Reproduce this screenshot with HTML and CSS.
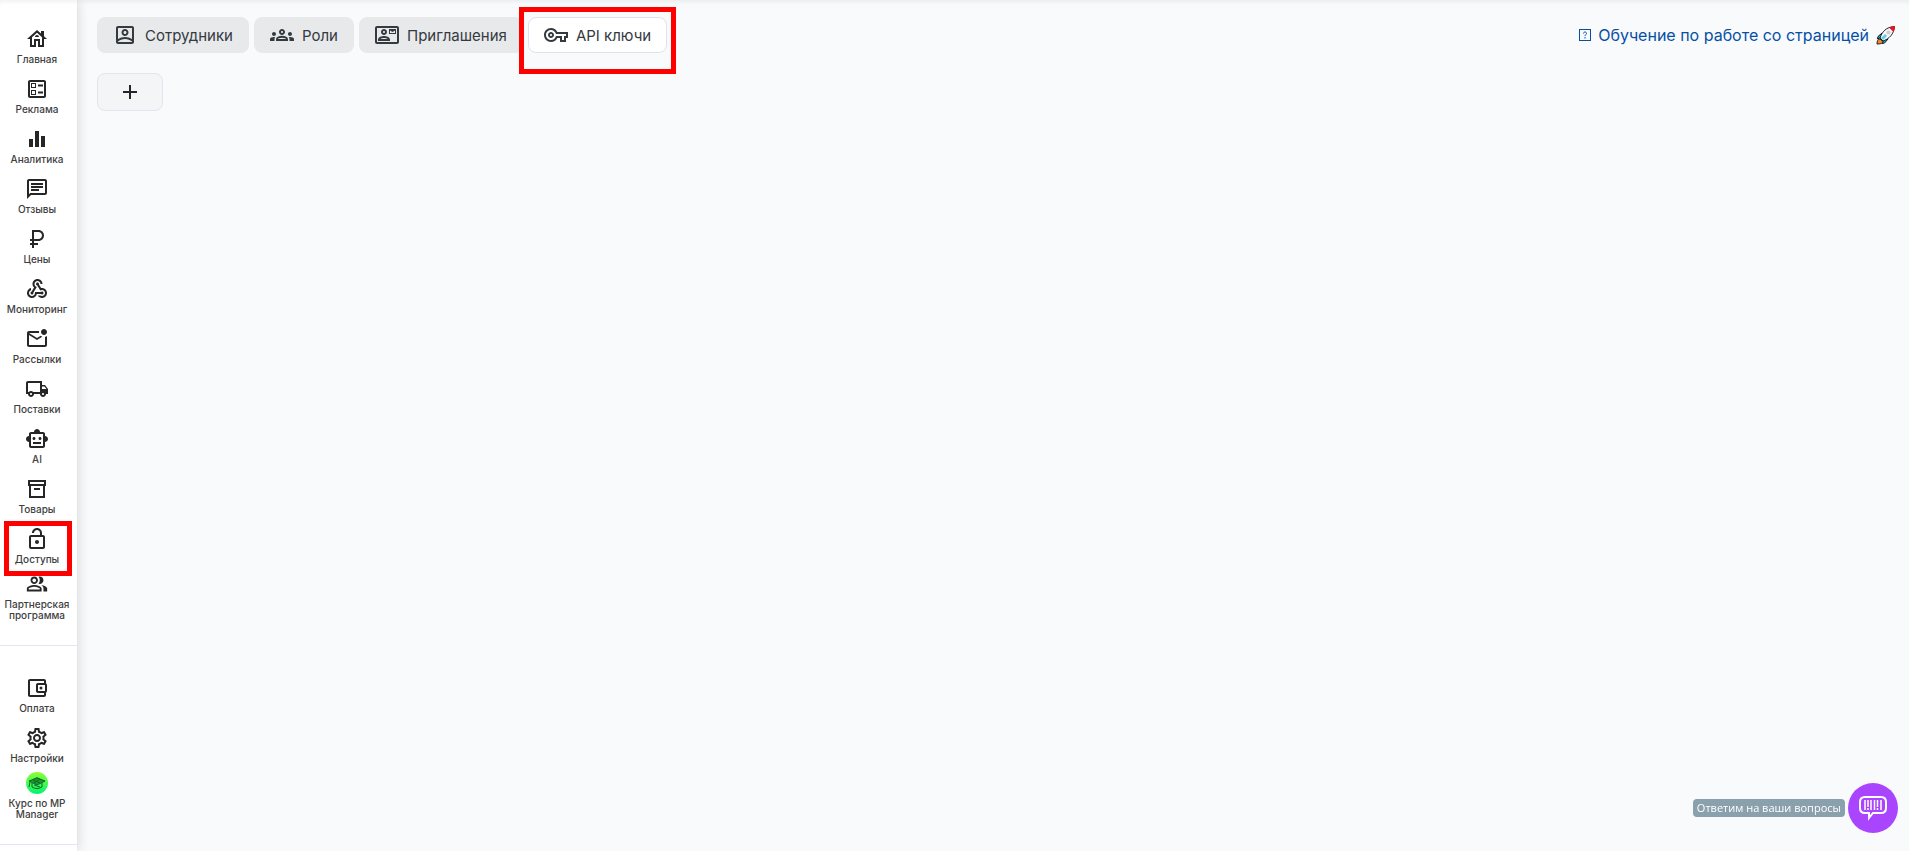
FILE: index.html
```html
<!DOCTYPE html>
<html lang="ru">
<head>
  <meta charset="UTF-8">
  <meta name="viewport" content="width=device-width, initial-scale=1.0">
  <title>API ключи</title>
  <link rel="stylesheet" href="styles.css">
</head>
<body>

  <!-- Боковое меню -->
  <aside class="sidebar">
    <nav class="menu">
      <a class="menu-item" href="#">
        <svg class="icon" viewBox="0 0 24 24"><path d="M19 9.3V4h-3v2.6L12 3 2 12h3v8h6v-6h2v6h6v-8h3zM17 18h-2v-6H9v6H7v-7.81l5-4.5 5 4.5zM10 10h4c0-1.1-.9-2-2-2s-2 .9-2 2z"/></svg>
        <span>Главная</span>
      </a>
      <a class="menu-item" href="#">
        <svg class="icon" viewBox="0 0 24 24"><path d="M13 7.5h5v2h-5zm0 7h5v2h-5zM19 3H5c-1.1 0-2 .9-2 2v14c0 1.1.9 2 2 2h14c1.1 0 2-.9 2-2V5c0-1.1-.9-2-2-2zm0 16H5V5h14v14zM11 6H6v5h5V6zm-1 4H7V7h3v3zm1 3H6v5h5v-5zm-1 4H7v-3h3v3z"/></svg>
        <span>Реклама</span>
      </a>
      <a class="menu-item" href="#">
        <svg class="icon" viewBox="0 0 24 24"><path d="M4 20v-8h4v8zm6 0V4h4v16zm6 0V9h4v11z"/></svg>
        <span>Аналитика</span>
      </a>
      <a class="menu-item" href="#">
        <svg class="icon" viewBox="0 0 24 24"><path d="M4 4h16v12H5.17L4 17.17V4m0-2c-1.1 0-1.99.9-1.99 2L2 22l4-4h14c1.1 0 2-.9 2-2V4c0-1.1-.9-2-2-2H4zm2 10h8v2H6v-2zm0-3h12v2H6V9zm0-3h12v2H6V6z"/></svg>
        <span>Отзывы</span>
      </a>
      <a class="menu-item" href="#">
        <svg class="icon" viewBox="0 0 24 24"><path d="M13.5 3H7v9H5v2h2v2H5v2h2v3h2v-3h4v-2H9v-2h4.5c3.04 0 5.5-2.46 5.5-5.5S16.54 3 13.5 3zm0 9H9V5h4.5C15.43 5 17 6.57 17 8.5S15.43 12 13.5 12z"/></svg>
        <span>Цены</span>
      </a>
      <a class="menu-item" href="#">
        <svg class="icon" viewBox="0 0 24 24"><path d="M10 15h5.88c.27-.31.67-.5 1.12-.5.83 0 1.5.67 1.5 1.5s-.67 1.5-1.5 1.5c-.44 0-.84-.19-1.12-.5H11.9c-.46 2.28-2.48 4-4.9 4-2.76 0-5-2.24-5-5 0-2.42 1.72-4.44 4-4.9v2.07C4.84 13.58 4 14.7 4 16c0 1.65 1.35 3 3 3s3-1.35 3-3v-1zm2.5-11c1.65 0 3 1.35 3 3h2c0-2.76-2.24-5-5-5s-5 2.24-5 5c0 1.43.6 2.71 1.55 3.62l-2.35 3.9c-.68.14-1.2.75-1.2 1.48 0 .83.67 1.5 1.5 1.5s1.5-.67 1.5-1.5c0-.16-.02-.31-.07-.45l3.38-5.63C10.49 9.61 9.5 8.42 9.5 7c0-1.65 1.35-3 3-3zm4.5 9c-.64 0-1.23.2-1.72.54l-3.05-5.07C11.53 8.35 11 7.74 11 7c0-.83.67-1.5 1.5-1.5S14 6.17 14 7c0 .15-.02.29-.06.43l2.19 3.65c.28-.05.57-.08.87-.08 2.76 0 5 2.24 5 5s-2.24 5-5 5c-1.85 0-3.47-1.01-4.33-2.5h2.67c.48.32 1.05.5 1.66.5 1.65 0 3-1.35 3-3s-1.35-3-3-3z"/></svg>
        <span>Мониторинг</span>
      </a>
      <a class="menu-item" href="#">
        <svg class="icon" viewBox="0 0 24 24"><path d="M22 8.98V18c0 1.1-.9 2-2 2H4c-1.1 0-2-.9-2-2V6c0-1.1.9-2 2-2h10.1c-.06.32-.1.66-.1 1 0 .34.04.68.1 1H4l8 5 3.67-2.29c.47.43 1.02.76 1.63.98L12 13 4 8v10h16V9.9c.74-.15 1.42-.48 2-.92zM16 5c0 1.66 1.34 3 3 3s3-1.34 3-3-1.34-3-3-3-3 1.34-3 3z"/></svg>
        <span>Рассылки</span>
      </a>
      <a class="menu-item" href="#">
        <svg class="icon" viewBox="0 0 24 24"><path d="M20 8h-3V4H3c-1.1 0-2 .9-2 2v11h2c0 1.66 1.34 3 3 3s3-1.34 3-3h6c0 1.66 1.34 3 3 3s3-1.34 3-3h2v-5l-3-4zm-.5 1.5l1.96 2.5H17V9.5h2.5zM6 18c-.55 0-1-.45-1-1s.45-1 1-1 1 .45 1 1-.45 1-1 1zm2.22-3c-.55-.61-1.33-1-2.22-1s-1.67.39-2.22 1H3V6h12v9H8.22zM18 18c-.55 0-1-.45-1-1s.45-1 1-1 1 .45 1 1-.45 1-1 1z"/></svg>
        <span>Поставки</span>
      </a>
      <a class="menu-item" href="#">
        <svg class="icon" viewBox="0 0 24 24"><path d="M20 9V7c0-1.1-.9-2-2-2h-3c0-1.66-1.34-3-3-3S9 3.34 9 5H6c-1.1 0-2 .9-2 2v2c-1.66 0-3 1.34-3 3s1.34 3 3 3v4c0 1.1.9 2 2 2h12c1.1 0 2-.9 2-2v-4c1.66 0 3-1.34 3-3s-1.34-3-3-3zm-2 10H6V7h12v12zm-9-6c-.83 0-1.5-.67-1.5-1.5S8.17 10 9 10s1.5.67 1.5 1.5S9.83 13 9 13zm7.5-1.5c0 .83-.67 1.5-1.5 1.5s-1.5-.67-1.5-1.5.67-1.5 1.5-1.5 1.5.67 1.5 1.5zM8 15h8v2H8v-2z"/></svg>
        <span>AI</span>
      </a>
      <a class="menu-item" href="#">
        <svg class="icon" viewBox="0 0 24 24"><path d="M3 3v6h1v12h16V9h1V3H3zm2 2h14v2H5V5zm1 4h12v10H6V9zm3 2v2h6v-2H9z" fill-rule="evenodd"/></svg>
        <span>Товары</span>
      </a>
      <a class="menu-item marked" href="#">
        <svg class="icon" viewBox="0 0 24 24"><path d="M12 17c1.1 0 2-.9 2-2s-.9-2-2-2-2 .9-2 2 .9 2 2 2zm6-9h-1V6c0-2.76-2.24-5-5-5S7 3.24 7 6h2c0-1.66 1.34-3 3-3s3 1.34 3 3v2H6c-1.1 0-2 .9-2 2v10c0 1.1.9 2 2 2h12c1.1 0 2-.9 2-2V10c0-1.1-.9-2-2-2zm0 12H6V10h12v10z"/></svg>
        <span>Доступы</span>
      </a>
      <a class="menu-item" href="#">
        <svg class="icon" viewBox="-1 -1 26 26"><path d="M16.67 13.13C18.04 14.06 19 15.32 19 17v3h4v-3c0-2.18-3.57-3.47-6.33-3.87zM15 12c2.21 0 4-1.79 4-4s-1.79-4-4-4c-.47 0-.91.1-1.33.24C14.5 5.27 15 6.58 15 8s-.5 2.73-1.33 3.76c.42.14.86.24 1.33.24zM9 12c2.21 0 4-1.79 4-4s-1.79-4-4-4-4 1.79-4 4 1.79 4 4 4zm0-6c1.1 0 2 .9 2 2s-.9 2-2 2-2-.9-2-2 .9-2 2-2zm0 7c-2.67 0-8 1.34-8 4v3h16v-3c0-2.66-5.33-4-8-4zm6 5H3v-.99C3.2 16.29 6.3 15 9 15s5.8 1.29 6 2v1z"/></svg>
        <span>Партнерская программа</span>
      </a>
    </nav>

    <nav class="menu menu-bottom">
      <a class="menu-item" href="#">
        <svg class="icon" viewBox="0 0 24 24"><path d="M21 7.28V5c0-1.1-.9-2-2-2H5c-1.11 0-2 .9-2 2v14c0 1.1.89 2 2 2h14c1.1 0 2-.9 2-2v-2.28c.59-.35 1-.98 1-1.72V9c0-.74-.41-1.37-1-1.72zM20 9v6h-7V9h7zM5 19V5h14v2h-6c-1.1 0-2 .9-2 2v6c0 1.1.9 2 2 2h6v2H5z"/><circle cx="16" cy="12" r="1.5"/></svg>
        <span>Оплата</span>
      </a>
      <a class="menu-item" href="#">
        <svg class="icon" viewBox="0 0 24 24"><path d="M19.43 12.98c.04-.32.07-.64.07-.98 0-.34-.03-.66-.07-.98l2.11-1.65c.19-.15.24-.42.12-.64l-2-3.46c-.09-.16-.26-.25-.44-.25-.06 0-.12.01-.17.03l-2.49 1c-.52-.4-1.08-.73-1.69-.98l-.38-2.65C14.46 2.18 14.25 2 14 2h-4c-.25 0-.46.18-.49.42l-.38 2.65c-.61.25-1.17.59-1.69.98l-2.49-1c-.06-.02-.12-.03-.18-.03-.17 0-.34.09-.43.25l-2 3.46c-.13.22-.07.49.12.64l2.11 1.65c-.04.32-.07.65-.07.98 0 .33.03.66.07.98l-2.11 1.65c-.19.15-.24.42-.12.64l2 3.46c.09.16.26.25.44.25.06 0 .12-.01.17-.03l2.49-1c.52.4 1.08.73 1.69.98l.38 2.65c.03.24.24.42.49.42h4c.25 0 .46-.18.49-.42l.38-2.65c.61-.25 1.17-.59 1.69-.98l2.49 1c.06.02.12.03.18.03.17 0 .34-.09.43-.25l2-3.46c.12-.22.07-.49-.12-.64l-2.11-1.65zm-1.98-1.71c.04.31.05.52.05.73 0 .21-.02.43-.05.73l-.14 1.13.89.7 1.08.84-.7 1.21-1.27-.51-1.04-.42-.9.68c-.43.32-.84.56-1.25.73l-1.06.43-.16 1.13-.2 1.35h-1.4l-.19-1.35-.16-1.13-1.06-.43c-.43-.18-.83-.41-1.23-.71l-.91-.7-1.06.43-1.27.51-.7-1.21 1.08-.84.89-.7-.14-1.13c-.03-.31-.05-.54-.05-.74s.02-.43.05-.73l.14-1.13-.89-.7-1.08-.84.7-1.21 1.27.51 1.04.42.9-.68c.43-.32.84-.56 1.25-.73l1.06-.43.16-1.13.2-1.35h1.39l.19 1.35.16 1.13 1.06.43c.43.18.83.41 1.23.71l.91.7 1.06-.43 1.27-.51.7 1.21-1.07.85-.89.7.14 1.13zM12 8c-2.21 0-4 1.79-4 4s1.79 4 4 4 4-1.79 4-4-1.79-4-4-4zm0 6c-1.1 0-2-.9-2-2s.9-2 2-2 2 .9 2 2-.9 2-2 2z"/></svg>
        <span>Настройки</span>
      </a>
      <a class="menu-item" href="#">
        <svg class="icon" viewBox="0 0 24 24">
          <defs>
            <linearGradient id="avatar" x1="0" y1="0" x2="0" y2="1">
              <stop offset="0" stop-color="#8dff35"/>
              <stop offset="1" stop-color="#00f56c"/>
            </linearGradient>
          </defs>
          <circle cx="12" cy="12" r="11" fill="url(#avatar)"/>
          <path d="M4 10l8-4 8 4-8 4z" fill="#17a02c"/>
          <path d="M4 10l8-3 8 3-8 4zM7 12v4c3 2 7 2 10 0v-4M5 11l-1 5M8 9l7 3M9 12l6-4M9 14l6 2" fill="none" stroke="#14632b" stroke-width="1"/>
        </svg>
        <span>Курс по MP Manager</span>
      </a>
    </nav>
  </aside>

  <main class="content">
    <header class="topbar">
      <div class="tabs">
        <button class="tab" type="button">
          <svg class="icon" viewBox="0 0 24 24"><path d="M19 3H5c-1.1 0-2 .9-2 2v14c0 1.1.9 2 2 2h14c1.1 0 2-.9 2-2V5c0-1.1-.9-2-2-2zM5 19v-.4c1.8-1.6 4.3-2.6 7-2.6s5.2 1 7 2.6v.4zm14-2.9c-1.9-1.3-4.3-2.1-7-2.1s-5.1.8-7 2.1V5h14zM12 13c1.93 0 3.5-1.57 3.5-3.5S13.93 6 12 6 8.5 7.57 8.5 9.5 10.07 13 12 13zm0-5c.83 0 1.5.67 1.5 1.5S12.83 11 12 11s-1.5-.67-1.5-1.5S11.17 8 12 8z"/></svg>
          Сотрудники
        </button>
        <button class="tab" type="button">
          <svg class="icon" viewBox="0 0 24 24"><path d="M4 13c1.1 0 2-.9 2-2s-.9-2-2-2-2 .9-2 2 .9 2 2 2zm1.13 1.1c-.37-.06-.74-.1-1.13-.1-.99 0-1.93.21-2.78.58C.48 14.9 0 15.62 0 16.43V18h4.5v-1.61c0-.83.23-1.61.63-2.29zM20 13c1.1 0 2-.9 2-2s-.9-2-2-2-2 .9-2 2 .9 2 2 2zm4 3.43c0-.81-.48-1.53-1.22-1.85-.85-.37-1.79-.58-2.78-.58-.39 0-.76.04-1.13.1.4.68.63 1.46.63 2.29V18H24v-1.57zm-7.76-2.78c-1.17-.52-2.61-.9-4.24-.9-1.63 0-3.07.39-4.24.9C6.68 14.13 6 15.21 6 16.39V18h12v-1.61c0-1.18-.68-2.26-1.76-2.74zM8.07 16c.09-.23.13-.39.91-.69.97-.38 1.99-.56 3.02-.56s2.05.18 3.02.56c.77.3.81.46.91.69H8.07zM12 8c.55 0 1 .45 1 1s-.45 1-1 1-1-.45-1-1 .45-1 1-1m0-2c-1.66 0-3 1.34-3 3s1.34 3 3 3 3-1.34 3-3-1.34-3-3-3z"/></svg>
          Роли
        </button>
        <button class="tab" type="button">
          <svg class="icon" viewBox="0 0 24 24"><path d="M2 3C.9 3 0 3.9 0 5v14c0 1.1.9 2 2 2h20c1.1 0 2-.9 2-2V5c0-1.1-.9-2-2-2zm0 2h20v14H2zM9 12c1.65 0 3-1.35 3-3s-1.35-3-3-3-3 1.35-3 3 1.35 3 3 3zm0-4c.55 0 1 .45 1 1s-.45 1-1 1-1-.45-1-1 .45-1 1-1zM3 16.6V18h12v-1.4c0-2.5-4-3.6-6-3.6s-6 1.1-6 3.6zM5.5 16c.7-.6 2.2-1 3.5-1s2.8.4 3.5 1zM14 6v5h7V6zm1 1.5L17.5 9 20 7.5V10h-5z" fill-rule="evenodd"/></svg>
          Приглашения
        </button>
        <button class="tab tab-active marked" type="button">
          <svg class="icon" viewBox="0 0 24 24"><path d="M22 19h-6v-4h-2.68c-1.14 2.42-3.6 4-6.32 4-3.86 0-7-3.14-7-7s3.14-7 7-7c2.72 0 5.17 1.58 6.32 4H24v6h-2v4zm-4-2h2v-4h2v-2H11.94l-.23-.67C11.01 8.34 9.11 7 7 7c-2.76 0-5 2.24-5 5s2.24 5 5 5c2.11 0 4.01-1.34 4.71-3.33l.23-.67H18v4zM7 15c-1.65 0-3-1.35-3-3s1.35-3 3-3 3 1.35 3 3-1.35 3-3 3zm0-4c-.55 0-1 .45-1 1s.45 1 1 1 1-.45 1-1-.45-1-1-1z"/></svg>
          API ключи
        </button>
      </div>

      <a class="help-link" href="#">
        <svg class="help-icon" viewBox="0 0 12 12"><rect x=".5" y=".5" width="11" height="11"/><path d="M4.5 4.5c0-2 3-2 3 0 0 1-1.5 1-1.5 2.5M6 8v1.5"/></svg>
        Обучение по работе со страницей
        <svg class="rocket" viewBox="0 0 20 20">
          <path d="M6 8L2 11.5 1.500 14l4-2zM12 14l-3.500 4-2.500.5 2-4z" fill="#16b8ef" stroke="#111"/>
          <path d="M1 19c0-3 1-5 3-5l3 2.500c0 2-3 2.500-6 2.500z" fill="#f78b1f" stroke="#222"/>
          <path d="M4 13C6 7 10 2 18.500 1.500 18 9 13 14 7 16z" fill="#f7f7f7" stroke="#222"/>
          <path d="M13 2.500q3-1.500 6-1.500 0 3-1.500 6z" fill="#e81224"/>
          <path d="M5 13l4-4 2 2-4 4z" fill="#5ecbf0"/>
          <circle cx="12.500" cy="7.500" r="2" fill="#c9ced3"/>
        </svg>
      </a>
    </header>

    <button class="add-button" type="button" aria-label="Добавить">
      <svg class="icon" viewBox="0 0 24 24"><path d="M19 13h-6v6h-2v-6H5v-2h6V5h2v6h6z"/></svg>
    </button>
  </main>

  <!-- Чат поддержки -->
  <div class="chat">
    <span class="chat-label">Ответим на ваши вопросы</span>
    <button class="chat-button" type="button" aria-label="Чат">
      <svg class="chat-icon" viewBox="0 0 30 26"><path d="M7 2h16q5 0 5 5v6q0 5-5 5h-8l-4 5v-5H7q-5 0-5-5V7q0-5 5-5z"/><path d="M7 5v10M10 5v7M10 13v2M13 5v10M16.500 5v10M19.500 5v7M19.500 13v2M23 5v10" stroke-width="1.500"/></svg>
    </button>
  </div>

</body>
</html>
```
FILE: styles.css
```css
* {
  box-sizing: border-box;
}
body {
  margin: 0;
  min-height: 100vh;
  display: flex;
  background-color: #f9fafc;
  font-family: Inter, "Liberation Sans", sans-serif;
  color: #262626;
}
a {
  color: inherit;
  text-decoration: none;
}
button {
  font: inherit;
  color: inherit;
  cursor: pointer;
}
.icon {
  width: 24px;
  height: 24px;
  flex: none;
  fill: currentColor;
}

/* Боковое меню */
.sidebar {
  width: 77px;
  flex: none;
  background-color: #fff;
  box-shadow: 0 0 12px rgba(0, 0, 0, 0.16), inset 0 4px 4px -2px rgba(0, 0, 0, 0.06);
}
.menu {
  display: flex;
  flex-direction: column;
  padding: 21px 0 24px;
  border-bottom: 1px solid #e4e5f0;
}
.menu-bottom {
  padding-top: 24px;
}
.menu-item {
  display: flex;
  flex-direction: column;
  align-items: center;
  justify-content: center;
  gap: 3px;
  height: 50px;
  padding-right: 3px;
  font-size: 10px;
  line-height: 11px;
  font-weight: 500;
  text-align: center;
}
.menu-item span {
  color: #404040;
}

/* Красная рамка вокруг нужного пункта */
.marked {
  position: relative;
}
.marked::after {
  content: "";
  position: absolute;
  z-index: 1;
  border: 5px solid #f00;
  pointer-events: none;
}
.menu-item.marked::after {
  inset: 0 5px -5px 4px;
}
.tab.marked::after {
  inset: -11px -10px -22px;
}

/* Основная часть */
.content {
  flex: 1;
  padding: 17px 13px 17px 20px;
  box-shadow: inset 0 4px 4px -2px rgba(0, 0, 0, 0.06);
}
.topbar {
  display: flex;
  align-items: center;
  justify-content: space-between;
  margin-bottom: 20px;
}
.tabs {
  display: flex;
  gap: 5px;
}
.tab {
  display: flex;
  align-items: center;
  gap: 8px;
  height: 36px;
  padding: 0 15px;
  border: 1px solid #e8e9eb;
  border-radius: 8px;
  background-color: #e8e9eb;
  color: #343a40;
  font-size: 15px;
}
.tab-active {
  background-color: #fff;
  border-color: #dfe1ef;
}
.help-link {
  display: flex;
  align-items: center;
  gap: 7px;
  color: #0550a5;
  font-size: 16px;
}
.help-icon {
  width: 12px;
  height: 12px;
  fill: none;
  stroke: currentColor;
}
.rocket {
  width: 20px;
  height: 20px;
}
.add-button {
  display: flex;
  align-items: center;
  justify-content: center;
  width: 66px;
  height: 38px;
  padding: 0;
  border: 1px solid #e4e5f0;
  border-radius: 8px;
  background-color: #f4f5f7;
}

/* Чат */
.chat {
  position: fixed;
  right: 11px;
  bottom: 18px;
  display: flex;
  align-items: center;
  gap: 3px;
}
.chat-label {
  padding: 0 4px;
  border-radius: 4px;
  background-color: #8aa0ac;
  color: #fff;
  font-family: "Open Sans", sans-serif;
  font-size: 11px;
  font-weight: 500;
  line-height: 18px;
}
.chat-button {
  display: flex;
  align-items: center;
  justify-content: center;
  width: 50px;
  height: 50px;
  padding: 0;
  border: none;
  border-radius: 50%;
  background-color: #a945ff;
}
.chat-icon {
  width: 30px;
  height: 26px;
  fill: none;
  stroke: #fff;
  stroke-width: 2;
}
```
